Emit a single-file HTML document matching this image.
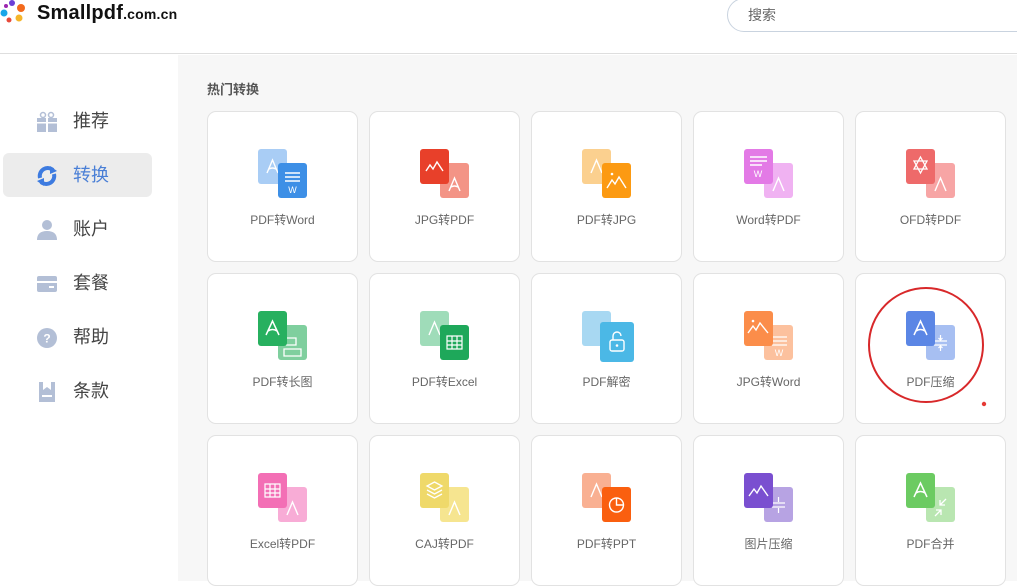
<!DOCTYPE html>
<html><head><meta charset="utf-8"><style>
*{margin:0;padding:0;box-sizing:border-box}
body{width:1017px;height:581px;overflow:hidden;background:#fff;font-family:"Liberation Sans","Noto Sans CJK SC",sans-serif;position:relative}
.hdr{position:absolute;left:0;top:0;width:1017px;height:54px;border-bottom:1px solid #dedede;background:#fff}
.logo{position:absolute;left:37px;top:2px;font-weight:bold;color:#111;font-size:20px;letter-spacing:0.2px}
.logo small{font-size:14px}
.search{position:absolute;left:727px;top:-2px;width:320px;height:34px;border:1px solid #c9d3df;border-radius:17px;padding-left:20px;line-height:32px;font-size:14px;color:#666}
.side{position:absolute;left:0;top:55px;width:178px;height:526px;background:#fff}
.main{position:absolute;left:178px;top:55px;width:839px;height:526px;background:#f7f7f7}
.it{position:absolute;left:0;width:178px;height:30px;font-size:18px;color:#444;line-height:30px}
.it span{position:absolute;left:73px}
.it svg{position:absolute;left:36px;top:5px}
.act{position:absolute;left:3px;top:153px;width:149px;height:44px;background:#ececec;border-radius:6px}
h3{position:absolute;left:207px;top:79px;font-size:13px;color:#555;font-weight:bold}
.card{position:absolute;width:151px;height:151px;background:#fff;border:1px solid #e2e2e2;border-radius:9px}
.card .b,.card .f{position:absolute;width:29px;height:35px;border-radius:3px}
.card .b{left:50px;top:37px}
.card .f{left:70px;top:51px}
.card .l{position:absolute;left:0;top:99px;width:149px;text-align:center;font-size:12px;color:#666}
svg.g{position:absolute;left:0;top:0}
</style></head><body>
<div class="hdr">
<svg style="position:absolute;left:0;top:0" width="26" height="24"><circle cx="12" cy="3" r="3" fill="#6b3fd6"/><circle cx="21" cy="8" r="4" fill="#f36a1d"/><circle cx="4" cy="13" r="3.5" fill="#1aa6e8"/><circle cx="19" cy="18" r="3.5" fill="#f5b52a"/><circle cx="9" cy="20" r="2.5" fill="#e74a3b"/><circle cx="6" cy="6" r="2" fill="#9c27b0"/></svg>
<div class="logo">Smallpdf<small>.com.cn</small></div>
<div class="search">搜索</div>
</div>
<div class="side"></div>
<div class="main"></div>
<div class="act"></div>
<div class="it" style="top:106px"><svg width="22" height="22"><rect x="1" y="7" width="20" height="14" fill="#b3bfd6"/><rect x="1" y="11" width="20" height="1.5" fill="#fff"/><rect x="10" y="7" width="2" height="14" fill="#fff"/><circle cx="7" cy="4" r="2.5" fill="none" stroke="#b3bfd6" stroke-width="1.5"/><circle cx="15" cy="4" r="2.5" fill="none" stroke="#b3bfd6" stroke-width="1.5"/></svg><span>推荐</span></div>
<div class="it" style="top:160px;color:#4a7fd6"><svg width="22" height="22"><path d="M4 13 A8 8 0 0 1 17 5" stroke="#3d7be0" stroke-width="4" fill="none"/><path d="M14 1 L21 6 L14 9Z" fill="#3d7be0"/><path d="M18 9 A8 8 0 0 1 5 17" stroke="#3d7be0" stroke-width="4" fill="none"/><path d="M8 21 L1 16 L8 13Z" fill="#3d7be0"/></svg><span>转换</span></div>
<div class="it" style="top:214px"><svg width="22" height="22"><circle cx="11" cy="6" r="5" fill="#b3bfd6"/><path d="M1 21 Q1 12 11 12 Q21 12 21 21Z" fill="#b3bfd6"/></svg><span>账户</span></div>
<div class="it" style="top:268px"><svg width="22" height="22"><rect x="1" y="3" width="20" height="16" rx="2" fill="#b3bfd6"/><rect x="1" y="8" width="20" height="2" fill="#fff"/><rect x="13" y="13" width="5" height="2" fill="#fff"/></svg><span>套餐</span></div>
<div class="it" style="top:322px"><svg width="22" height="22"><circle cx="11" cy="11" r="10" fill="#b3bfd6"/><text x="11" y="15.5" font-size="12" font-weight="bold" fill="#fff" text-anchor="middle" font-family="Liberation Sans">?</text></svg><span>帮助</span></div>
<div class="it" style="top:376px"><svg width="22" height="22"><path d="M3 1h16v20H3Z" fill="#b3bfd6"/><path d="M7 1v8l4-3 4 3V1" fill="#fff"/><rect x="6" y="14" width="10" height="2" fill="#fff"/></svg><span>条款</span></div>
<h3>热门转换</h3>

<div class="card" style="left:207px;top:111px"><div class="b" style="background:#a9cdf5"><svg class="g" width="29" height="35"><path d="M9 24 L14.5 11 L20 24 M11 20 Q14.5 18 18 20" stroke="#fff" stroke-width="1.4" fill="none"/></svg></div><div class="f" style="background:#3d8fe6"><svg class="g" width="29" height="35"><path d="M7 10h15M7 14h15M7 18h15" stroke="#fff" stroke-width="1.4"/><text x="14.5" y="30" font-size="9" fill="#fff" text-anchor="middle" font-family="Liberation Sans">W</text></svg></div><div class="l">PDF转Word</div></div>
<div class="card" style="left:369px;top:111px"><div class="f" style="background:#f39486"><svg class="g" width="29" height="35"><path d="M9 28 L14.5 15 L20 28 M11 24 Q14.5 22 18 24" stroke="#fff" stroke-width="1.4" fill="none"/></svg></div><div class="b" style="background:#e8402a"><svg class="g" width="29" height="35"><path d="M6 22 L10 16 L13 20 L17 13 L23 22" stroke="#fff" stroke-width="1.4" fill="none"/></svg></div><div class="l">JPG转PDF</div></div>
<div class="card" style="left:531px;top:111px"><div class="b" style="background:#fbd08f"><svg class="g" width="29" height="35"><path d="M9 24 L14.5 11 L20 24" stroke="#fff" stroke-width="1.4" fill="none"/></svg></div><div class="f" style="background:#fc9a12"><svg class="g" width="29" height="35"><circle cx="10" cy="11" r="1.3" fill="#fff"/><path d="M5 25 L10 17 L13 21 L17 14 L24 25" stroke="#fff" stroke-width="1.4" fill="none"/></svg></div><div class="l">PDF转JPG</div></div>
<div class="card" style="left:693px;top:111px"><div class="f" style="background:#f0b2f2"><svg class="g" width="29" height="35"><path d="M9 28 L14.5 15 L20 28" stroke="#fff" stroke-width="1.4" fill="none"/></svg></div><div class="b" style="background:#e37ae6"><svg class="g" width="29" height="35"><path d="M6 8h17M6 12h17M6 16h12" stroke="#fff" stroke-width="1.4"/><text x="14" y="28" font-size="9" fill="#fff" text-anchor="middle" font-family="Liberation Sans">W</text></svg></div><div class="l">Word转PDF</div></div>
<div class="card" style="left:855px;top:111px"><div class="f" style="background:#f7a5a5"><svg class="g" width="29" height="35"><path d="M9 28 L14.5 15 L20 28" stroke="#fff" stroke-width="1.4" fill="none"/></svg></div><div class="b" style="background:#ee6a6a"><svg class="g" width="29" height="35"><path d="M14.5 8 L21 20 L8 20Z M14.5 24 L8 12 L21 12Z" stroke="#fff" stroke-width="1.3" fill="none"/></svg></div><div class="l">OFD转PDF</div></div>
<div class="card" style="left:207px;top:273px"><div class="f" style="background:#7fcf9e"><svg class="g" width="29" height="35"><path d="M6 13h12v7H6Z M6 24h17v7H6Z" stroke="#fff" stroke-width="1.3" fill="none"/></svg></div><div class="b" style="background:#27b05f"><svg class="g" width="29" height="35"><path d="M8 24 L14.5 10 L21 24 M10 20 Q14.5 17 19 20" stroke="#fff" stroke-width="1.5" fill="none"/></svg></div><div class="l">PDF转长图</div></div>
<div class="card" style="left:369px;top:273px"><div class="b" style="background:#9fdcb9"><svg class="g" width="29" height="35"><path d="M9 24 L14.5 11 L20 24" stroke="#fff" stroke-width="1.4" fill="none"/></svg></div><div class="f" style="background:#1ea85a"><svg class="g" width="29" height="35"><path d="M7 11h15v13H7Z M7 16h15M7 20h15M12 11v13M17 11v13" stroke="#fff" stroke-width="1.2" fill="none"/></svg></div><div class="l">PDF转Excel</div></div>
<div class="card" style="left:531px;top:273px"><div class="b" style="background:#a8d8f2"></div><div class="f" style="background:#4bb8e6;left:68px;top:48px;width:34px;height:40px"><svg class="g" width="34" height="40"><rect x="10" y="18" width="14" height="11" rx="2" stroke="#fff" stroke-width="1.4" fill="none"/><path d="M13 18v-4a4 4 0 0 1 8 0" stroke="#fff" stroke-width="1.4" fill="none"/><circle cx="17" cy="23.5" r="1.3" fill="#fff"/></svg></div><div class="l">PDF解密</div></div>
<div class="card" style="left:693px;top:273px"><div class="f" style="background:#fcc19e"><svg class="g" width="29" height="35"><path d="M8 12h15M8 16h15M8 20h15" stroke="#fff" stroke-width="1.3"/><text x="15" y="31" font-size="9" fill="#fff" text-anchor="middle" font-family="Liberation Sans">W</text></svg></div><div class="b" style="background:#fb8d4a"><svg class="g" width="29" height="35"><circle cx="9" cy="10" r="1.3" fill="#fff"/><path d="M4 22 L9 15 L12 19 L16 12 L24 22" stroke="#fff" stroke-width="1.4" fill="none"/></svg></div><div class="l">JPG转Word</div></div>
<div class="card" style="left:855px;top:273px"><div class="f" style="background:#a7bff2"><svg class="g" width="29" height="35"><path d="M8 16h13M8 20h13M14.5 10v5l-2-2M14.5 15l2-2M14.5 26v-5l-2 2M14.5 21l2 2" stroke="#fff" stroke-width="1.2" fill="none"/></svg></div><div class="b" style="background:#5b86e5"><svg class="g" width="29" height="35"><path d="M8 24 L14.5 10 L21 24 M10 20 Q14.5 17 19 20" stroke="#fff" stroke-width="1.5" fill="none"/></svg></div><div class="l">PDF压缩</div></div>
<div class="card" style="left:207px;top:435px"><div class="f" style="background:#f8acd6"><svg class="g" width="29" height="35"><path d="M9 28 L14.5 15 L20 28" stroke="#fff" stroke-width="1.4" fill="none"/></svg></div><div class="b" style="background:#f36fb5"><svg class="g" width="29" height="35"><path d="M7 11h15v13H7Z M7 16h15M7 20h15M12 11v13M17 11v13" stroke="#fff" stroke-width="1.2" fill="none"/></svg></div><div class="l">Excel转PDF</div></div>
<div class="card" style="left:369px;top:435px"><div class="f" style="background:#f6e590"><svg class="g" width="29" height="35"><path d="M9 28 L14.5 15 L20 28" stroke="#fff" stroke-width="1.4" fill="none"/></svg></div><div class="b" style="background:#efd96a"><svg class="g" width="29" height="35"><path d="M14.5 9 L22 13 L14.5 17 L7 13Z M7 17 L14.5 21 L22 17 M7 21 L14.5 25 L22 21" stroke="#fff" stroke-width="1.3" fill="none"/></svg></div><div class="l">CAJ转PDF</div></div>
<div class="card" style="left:531px;top:435px"><div class="b" style="background:#f9b092"><svg class="g" width="29" height="35"><path d="M9 24 L14.5 11 L20 24" stroke="#fff" stroke-width="1.4" fill="none"/></svg></div><div class="f" style="background:#fa5f0f"><svg class="g" width="29" height="35"><circle cx="14.5" cy="18" r="7" stroke="#fff" stroke-width="1.4" fill="none"/><path d="M14.5 11v7h7" stroke="#fff" stroke-width="1.4" fill="none"/></svg></div><div class="l">PDF转PPT</div></div>
<div class="card" style="left:693px;top:435px"><div class="f" style="background:#b7a3e3"><svg class="g" width="29" height="35"><path d="M8 16h13M8 20h13M14.5 10v5M14.5 26v-5" stroke="#fff" stroke-width="1.2" fill="none"/></svg></div><div class="b" style="background:#7a4fd0"><svg class="g" width="29" height="35"><path d="M5 23 L10 16 L13 20 L17 13 L24 23" stroke="#fff" stroke-width="1.4" fill="none"/></svg></div><div class="l">图片压缩</div></div>
<div class="card" style="left:855px;top:435px"><div class="f" style="background:#b9e6b1"><svg class="g" width="29" height="35"><path d="M20 12 L14 18 M14 13v5h5 M9 29 L15 23 M10 23h5v5" stroke="#fff" stroke-width="1.3" fill="none"/></svg></div><div class="b" style="background:#6ccb62"><svg class="g" width="29" height="35"><path d="M8 24 L14.5 10 L21 24 M10 20 Q14.5 17 19 20" stroke="#fff" stroke-width="1.5" fill="none"/></svg></div><div class="l">PDF合并</div></div>

<svg style="position:absolute;left:860px;top:280px" width="140" height="135"><ellipse cx="66" cy="65" rx="57" ry="57" stroke="#d8282a" stroke-width="2" fill="none"/><circle cx="124" cy="124" r="2.2" fill="#e53935"/></svg>
</body></html>
